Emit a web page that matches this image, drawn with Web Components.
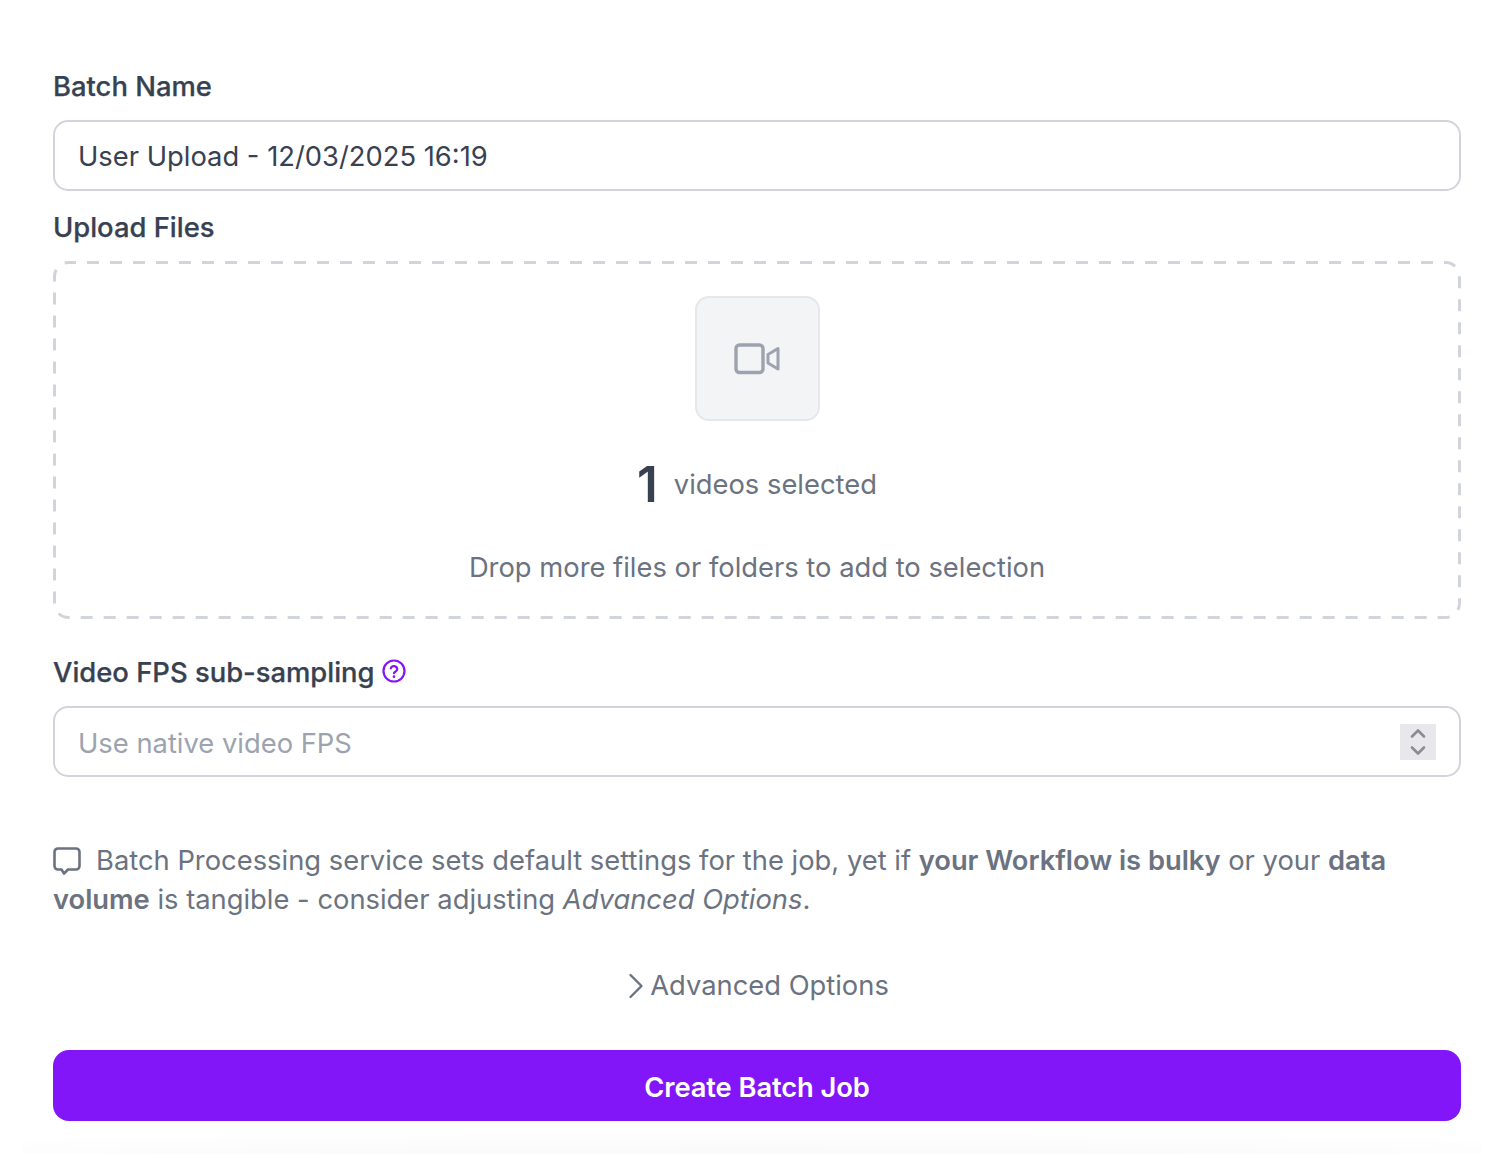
<!DOCTYPE html>
<html lang="en"><head><meta charset="utf-8"><title>Create Batch Job</title>
<style>html,body{margin:0;background:#fff}body{font-family:Inter,"Liberation Sans",sans-serif}</style></head>
<body>
<batch-form></batch-form>
<template id="t-label"><style>
:host{display:flex;align-items:center;gap:7px;font-size:27.4px;font-weight:500;line-height:40px;color:#374151;-webkit-text-stroke:.25px #374151}
</style><slot></slot></template>
<template id="t-input"><style>
:host{display:flex;align-items:center;justify-content:space-between;box-sizing:border-box;height:71px;border:2px solid #d1d5db;border-radius:15px;padding:2px 24px 0 23px;font-size:27.35px;color:#374151;background:#fff}
:host([placeholder]){color:#9ca3af;padding-top:4px}
</style><slot></slot><slot name="end"></slot></template>
<template id="t-drop"><style>
:host{display:flex;flex-direction:column;align-items:center;box-sizing:border-box;height:358px;border-radius:15px;padding-top:35px;position:relative}
svg.b{position:absolute;inset:0;width:100%;height:100%;pointer-events:none}
.ic{width:125px;height:125px;box-sizing:border-box;background:#f3f4f6;border:2px solid #e5e7eb;border-radius:14px;display:flex;align-items:center;justify-content:center}
.count{display:flex;align-items:center;gap:16px;margin-top:36px;height:56px;font-size:27.35px;color:#6b7280}
.count span:last-child{margin-top:-2px}
.n{font-size:49px;font-weight:600;color:#374151;line-height:56px}
.hint{margin-top:35px;font-size:27.35px;line-height:40px;color:#6b7280}
</style>
<svg class="b" viewBox="0 0 1408 358" preserveAspectRatio="none"><rect x="1.5" y="1.5" width="1405" height="355" rx="14" fill="none" stroke="#d1d5db" stroke-width="3" stroke-dasharray="12 11" stroke-dashoffset="4.5"/></svg>
<div class="ic"><svg width="46" height="32" viewBox="0 0 46 32" fill="none" stroke="#9ca3af" stroke-width="3.4" stroke-linejoin="round" stroke-linecap="round"><rect x="2" y="2" width="27" height="27.500" rx="3.500"/><path d="M34 11.500 44 5.500v20.500l-10-6z" stroke-width="3"/></svg></div>
<div class="count"><span class="n">1</span><span>videos selected</span></div>
<div class="hint">Drop more files or folders to add to selection</div></template>
<template id="t-note"><style>
:host{display:block;font-size:27.35px;line-height:39px;color:#6b7280}
svg{vertical-align:-5px;margin-right:15px}
</style><svg width="28" height="28" viewBox="0 0 28 28" fill="none" stroke="#6b7280" stroke-width="2.6" stroke-linejoin="round"><path d="M5 1.500h18a3.500 3.500 0 0 1 3.500 3.500v14a3.500 3.500 0 0 1-3.500 3.500H15l-4 4-2.500-4H5A3.500 3.500 0 0 1 1.500 19V5A3.500 3.500 0 0 1 5 1.500z"/></svg><slot></slot></template>
<template id="t-adv"><style>
:host{display:flex;justify-content:center;align-items:center;gap:6px;padding-left:3px;font-size:27.35px;line-height:40px;color:#6b7280}
</style><svg width="16" height="26" viewBox="0 0 16 26" fill="none" stroke="#6b7280" stroke-width="2.4" stroke-linecap="round" stroke-linejoin="round"><path d="M2.500 2 13.500 13 2.500 24"/></svg><slot></slot></template>
<template id="t-btn"><style>
:host{display:flex;align-items:center;justify-content:center;box-sizing:border-box;height:71px;padding-top:4px;border-radius:16px;background:#8315f9;color:#fff;font-size:27.35px;font-weight:600;letter-spacing:-.1px}
</style><slot></slot></template>
<template id="t-form"><style>
:host{display:flex;flex-direction:column;box-sizing:border-box;height:1174px;padding:66px 41px 0 53px;background:#fff}
.q{width:24px;height:24px;margin-top:-2px}
.spin{width:36px;height:36px;background:#e8e8ec;display:flex;align-items:center;justify-content:center;margin:-4px -1px 0 0}
b{font-weight:600;letter-spacing:-.03px}i{font-style:italic}
.fade{height:33px;margin:0 -20px 0 -31px;background:radial-gradient(ellipse 75% 110% at 50% 130%,#f7f7f7,#fff)}
</style>
<field-label>Batch Name</field-label>
<text-field style="margin-top:14px">User Upload - 12/03/2025 16:19</text-field>
<field-label style="margin-top:16px">Upload Files</field-label>
<drop-zone style="margin-top:14px"></drop-zone>
<field-label style="margin-top:33px">Video FPS sub-sampling<svg class="q" viewBox="0 0 24 24" fill="none" stroke="#8315f9" stroke-width="2.200" stroke-linecap="round"><circle cx="12" cy="12" r="10.500"/><path d="M8.800 9.300a3.300 3.300 0 0 1 6.400 1c0 2.200-3.200 2.600-3.200 4"/><path d="M12 17.600v.1" stroke-width="2.600"/></svg></field-label>
<text-field placeholder style="margin-top:14px">Use native video FPS<div slot="end" class="spin"><svg width="18" height="30" viewBox="0 0 18 30" fill="none" stroke="#8b8b95" stroke-width="2.600" stroke-linecap="round" stroke-linejoin="round"><path d="M3 9.500 9 3.500l6 6"/><path d="M3 20.500l6 6 6-6"/></svg></div></text-field>
<info-note style="margin-top:64px">Batch Processing service sets default settings for the job, yet if <b>your Workflow is bulky</b> or your <b>data</b><br><b>volume</b> is tangible - consider adjusting <i>Advanced Options</i>.</info-note>
<advanced-toggle style="margin-top:47px">Advanced Options</advanced-toggle>
<primary-button style="margin-top:44px">Create Batch Job</primary-button>
<div class="fade"></div></template>
<script>
const reg=(n,t)=>customElements.define(n,class extends HTMLElement{constructor(){super();this.attachShadow({mode:'open'}).appendChild(document.getElementById(t).content.cloneNode(true))}});
reg('field-label','t-label');reg('text-field','t-input');reg('drop-zone','t-drop');reg('info-note','t-note');reg('advanced-toggle','t-adv');reg('primary-button','t-btn');reg('batch-form','t-form');
</script>
</body></html>
